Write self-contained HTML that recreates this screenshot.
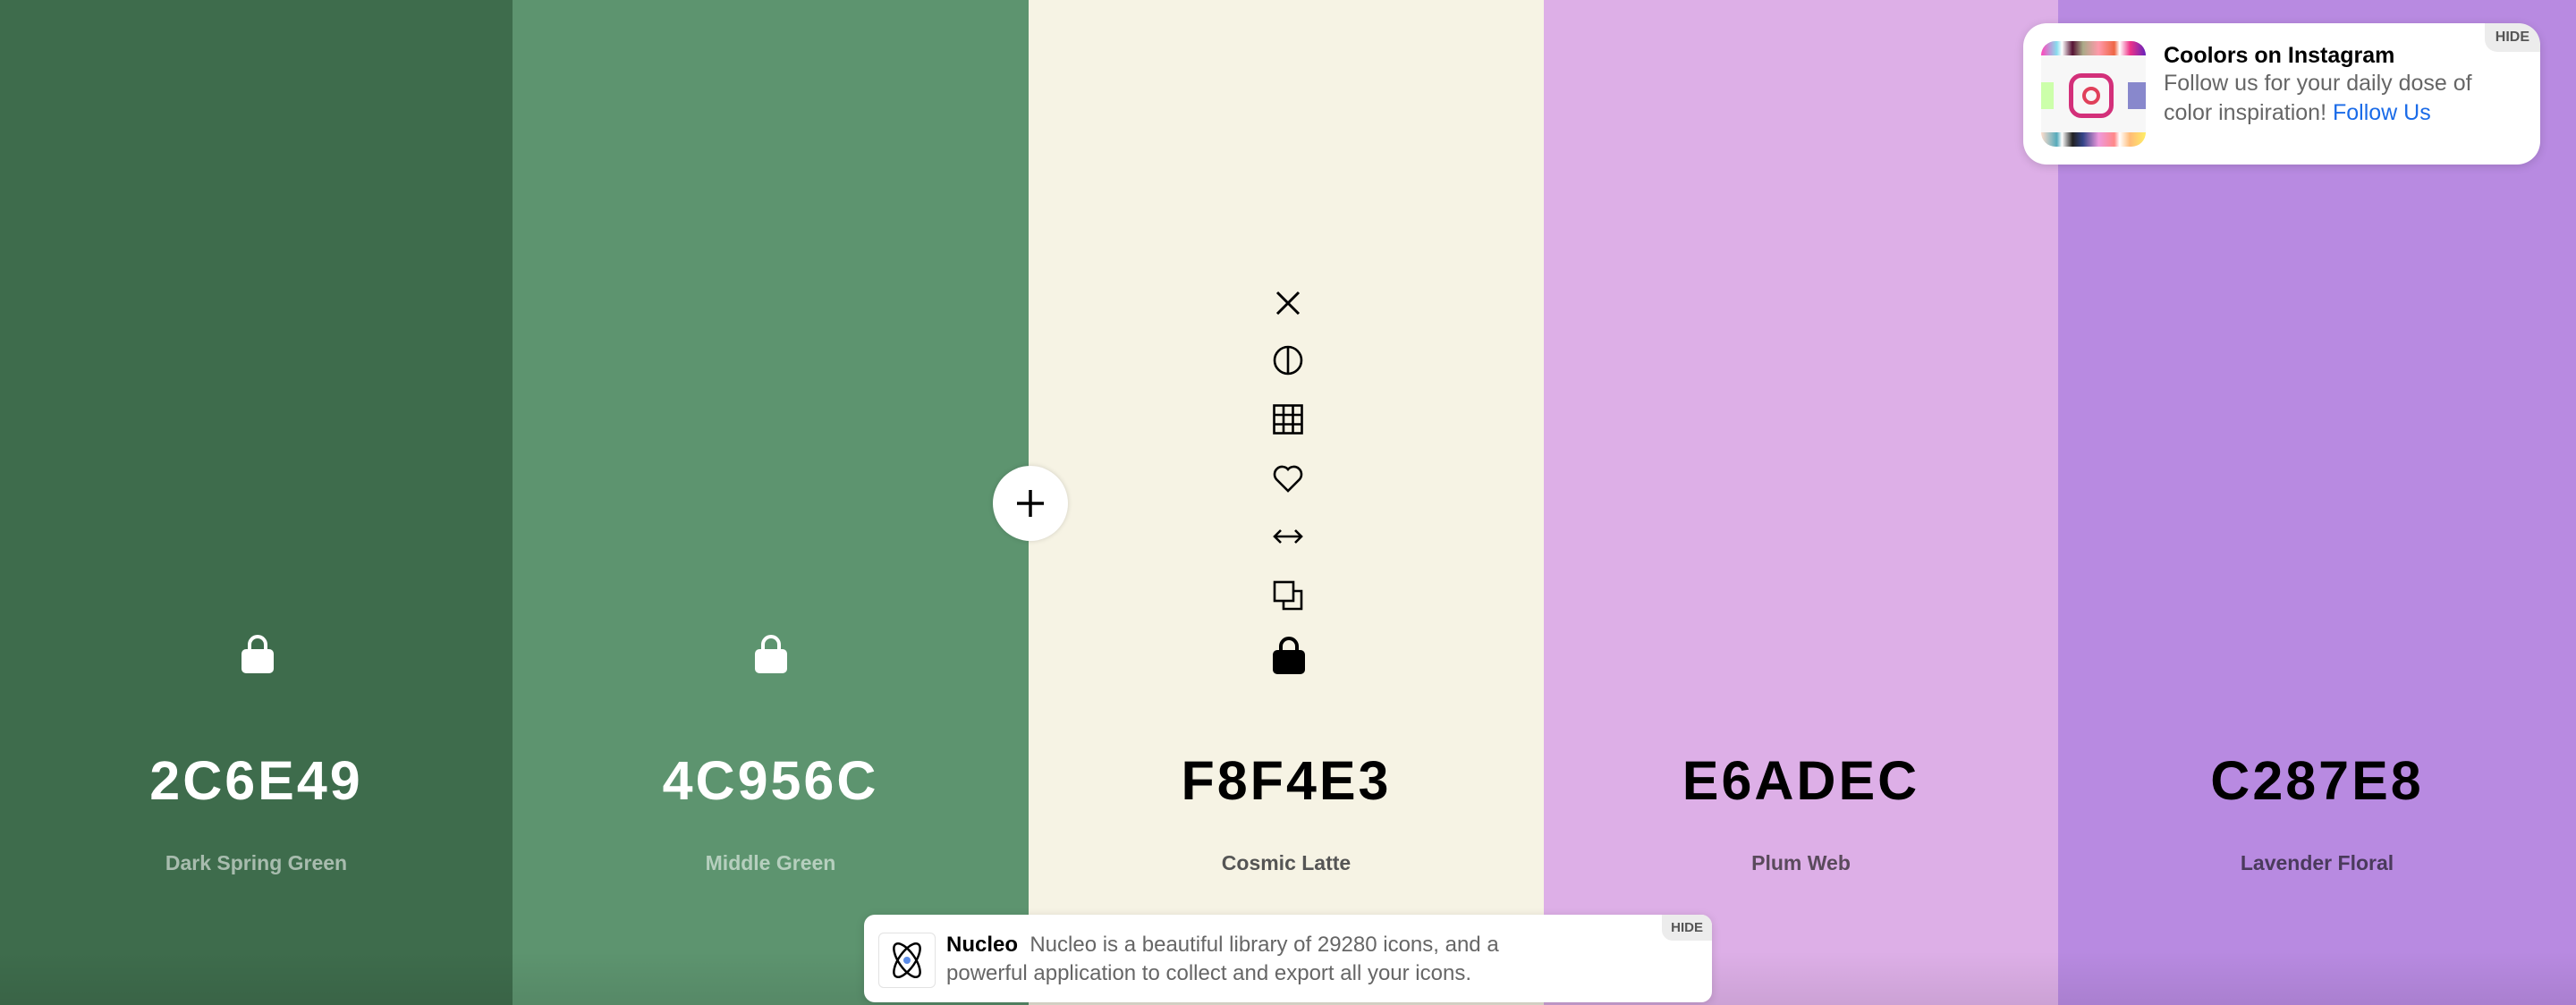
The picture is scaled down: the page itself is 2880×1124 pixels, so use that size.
<!DOCTYPE html>
<html><head><meta charset="utf-8"><style>
*{margin:0;padding:0;box-sizing:border-box}
body{width:2880px;height:1124px;overflow:hidden;font-family:"Liberation Sans",sans-serif;position:relative}
.col{position:absolute;top:0;height:1124px;width:576px}
.hex{position:absolute;top:838px;left:0;width:100%;text-align:center;font-weight:bold;font-size:61px;letter-spacing:3px;line-height:70px}
.name{position:absolute;top:951px;left:0;width:100%;text-align:center;font-weight:bold;font-size:23px;line-height:28px}
.lock{position:absolute;left:270px;top:708px}
.ic{position:absolute;left:1423px}
.card{position:absolute;background:#fff;box-shadow:0 2px 10px rgba(0,0,0,.15)}
.hide{position:absolute;right:0;top:0;background:#ececec;color:#555;font-weight:bold;font-size:16px;padding:7px 12px;border-radius:0 24px 0 14px}
</style></head><body>
<div class="col" style="left:0;width:573px;background:#3e6c4c;color:#fff">
<svg class="lock" width="36" height="46" viewBox="0 0 36 46"><path d="M9 20V13a9 9 0 0 1 18 0v7" fill="none" stroke="#fff" stroke-width="4"/><rect x="0" y="18" width="36" height="27" rx="5" fill="#fff"/></svg>
<div class="hex">2C6E49</div><div class="name" style="color:rgba(255,255,255,.55)">Dark Spring Green</div></div>
<div class="col" style="left:573px;width:577px;background:#5d946f;color:#fff">
<svg class="lock" style="left:271px" width="36" height="46" viewBox="0 0 36 46"><path d="M9 20V13a9 9 0 0 1 18 0v7" fill="none" stroke="#fff" stroke-width="4"/><rect x="0" y="18" width="36" height="27" rx="5" fill="#fff"/></svg>
<div class="hex">4C956C</div><div class="name" style="color:rgba(255,255,255,.55)">Middle Green</div></div>
<div class="col" style="left:1150px;background:#f6f3e4;color:#000">
<div class="hex">F8F4E3</div><div class="name" style="color:#555">Cosmic Latte</div></div>
<div class="col" style="left:1726px;width:575px;background:#ddafe7;color:#000">
<div class="hex">E6ADEC</div><div class="name" style="color:#5a4a5c">Plum Web</div></div>
<div class="col" style="left:2301px;width:579px;background:#b88ae1;color:#000">
<div class="hex">C287E8</div><div class="name" style="color:#4a3a5c">Lavender Floral</div></div>
<div style="position:absolute;left:0;bottom:0;width:2880px;height:60px;background:linear-gradient(rgba(0,0,0,0),rgba(0,0,0,.08))"></div>

<svg class="ic" style="top:322px" width="34" height="34" viewBox="0 0 34 34" fill="none" stroke="#000" stroke-width="3"><path d="M5 5L29 29M29 5L5 29"/></svg>
<svg class="ic" style="top:386px" width="34" height="34" viewBox="0 0 34 34" fill="none" stroke="#000" stroke-width="2.6"><circle cx="17" cy="17" r="15"/><path d="M17 2V32"/></svg>
<svg class="ic" style="top:452px" width="34" height="34" viewBox="0 0 34 34" fill="none" stroke="#000" stroke-width="2.6"><rect x="1.5" y="1.5" width="31" height="31"/><path d="M12 1.5V32.5M22.5 1.5V32.5M1.5 12H32.5M1.5 22.5H32.5"/></svg>
<svg class="ic" style="top:518px" width="34" height="34" viewBox="0 0 34 34" fill="none" stroke="#000" stroke-width="2.6"><path d="M17 31L4 18A8 8 0 0 1 17 7A8 8 0 0 1 30 18Z"/></svg>
<svg class="ic" style="top:583px" width="34" height="34" viewBox="0 0 34 34" fill="none" stroke="#000" stroke-width="2.6"><path d="M2 17H32M9 10L2 17L9 24M25 10L32 17L25 24"/></svg>
<svg class="ic" style="top:649px" width="34" height="34" viewBox="0 0 34 34" fill="none" stroke="#000" stroke-width="2.6"><rect x="2" y="2" width="21" height="21"/><path d="M23 12H32V32H12V23"/></svg>
<svg class="ic" style="top:710px" width="36" height="45" viewBox="0 0 36 45"><path d="M9 20V13a9 9 0 0 1 18 0v7" fill="none" stroke="#000" stroke-width="4"/><rect x="0" y="17" width="36" height="27" rx="5" fill="#000"/></svg>

<div style="position:absolute;left:1110px;top:521px;width:84px;height:84px;border-radius:50%;background:#fff;box-shadow:0 0 6px rgba(0,0,0,.15)"><svg width="84" height="84" viewBox="0 0 84 84" stroke="#000" stroke-width="3.5"><path d="M42 27V57M27 42H57"/></svg></div>

<div class="card" style="left:2262px;top:26px;width:578px;height:158px;border-radius:26px">
<div class="hide">HIDE</div>
<div style="position:absolute;left:20px;top:20px;width:117px;height:118px;border-radius:16px;overflow:hidden;background:#f7f7f7">
<div style="position:absolute;left:0;top:0;width:117px;height:16px;background:linear-gradient(90deg,#f4b,#8de 15%,#fff 20%,#513 30%,#aa8 40%,#f9a 55%,#e64 70%,#fff 75%,#e38 85%,#62b)"></div>
<div style="position:absolute;left:0;top:102px;width:117px;height:16px;background:linear-gradient(90deg,#fdc,#5ab 15%,#fff 20%,#222 30%,#348 40%,#e9d 55%,#f88 70%,#fff 75%,#fb7 85%,#fe6)"></div>
<div style="position:absolute;left:0;top:46px;width:14px;height:30px;background:#cfa"></div>
<div style="position:absolute;left:97px;top:46px;width:20px;height:30px;background:#88c"></div>
<div style="position:absolute;left:31px;top:36px;width:50px;height:50px;border-radius:14px;border:5px solid #d3307a"></div>
<div style="position:absolute;left:46px;top:51px;width:20px;height:20px;border-radius:50%;border:4px solid #e0405a"></div>
</div>
<div style="position:absolute;left:157px;top:22px;font-size:25px;font-weight:bold;color:#000">Coolors on Instagram</div>
<div style="position:absolute;left:157px;top:51px;width:390px;font-size:25px;line-height:33px;color:#666">Follow us for your daily dose of color inspiration! <span style="color:#1a6be8">Follow Us</span></div>
</div>

<div class="card" style="left:966px;top:1023px;width:948px;height:98px;border-radius:12px">
<div class="hide" style="border-radius:0 12px 0 12px;font-size:15px;padding:6px 10px">HIDE</div>
<div style="position:absolute;left:16px;top:20px;width:64px;height:62px;border:1px solid #e2e2e2;border-radius:6px">
<svg width="62" height="60" viewBox="0 0 62 60" fill="none" stroke="#000" stroke-width="2.5"><ellipse cx="31" cy="30" rx="9" ry="22" transform="rotate(-35 31 30)"/><ellipse cx="31" cy="30" rx="9" ry="22" transform="rotate(35 31 30)"/><circle cx="31" cy="30" r="4" fill="#5b8ce8" stroke="none"/></svg></div>
<div style="position:absolute;left:92px;top:18px;width:710px;font-size:24px;line-height:32px;color:#666"><b style="color:#000">Nucleo</b>&nbsp; Nucleo is a beautiful library of 29280 icons, and a powerful application to collect and export all your icons.</div>
</div>
</body></html>
